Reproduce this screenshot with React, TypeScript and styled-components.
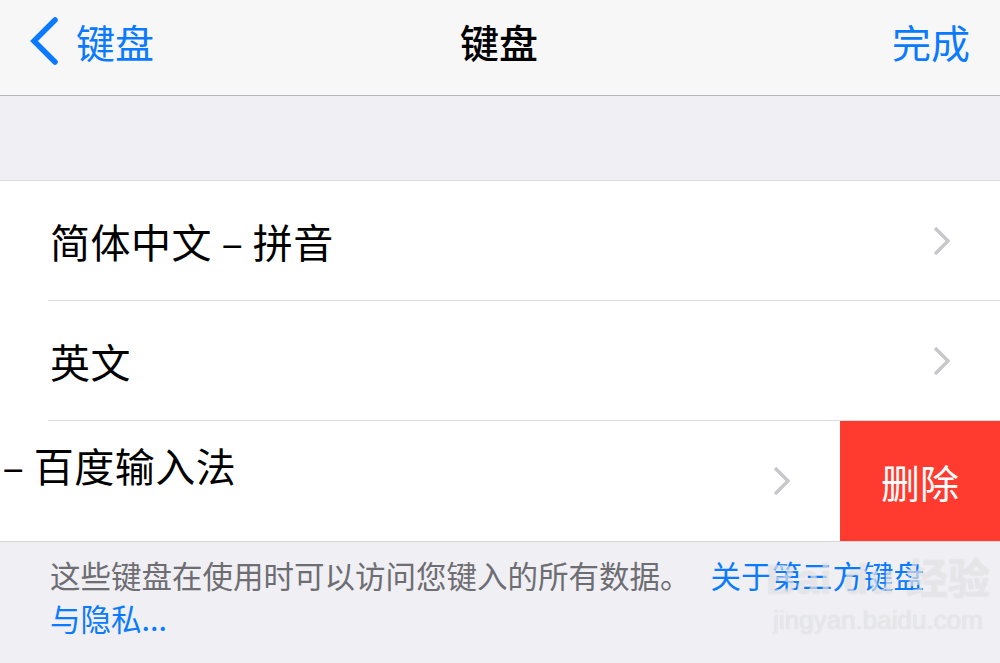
import {FC} from 'react'
import styled, {createGlobalStyle} from 'styled-components'

const FONT = `"Noto Sans CJK SC", "Noto Sans", sans-serif`
const BLUE = '#0a7aff'

const GlobalStyle = createGlobalStyle`
  html, body {
    margin: 0;
    padding: 0;
    background: #efeff4;
  }
  * {
    box-sizing: border-box;
  }
`

interface Item {
  label: string
  swiped?: boolean
}

const ITEMS: Item[] = [
  {label: '简体中文 – 拼音'},
  {label: '英文'},
  {label: '百度 – 百度输入法', swiped: true},
]

const BackChevron = () => (
  <svg width="32" height="48" viewBox="0 0 32 48">
    <path d="M27 3 L6 24 L27 45" fill="none" stroke={BLUE} strokeWidth="5.5" strokeLinecap="round" />
  </svg>
)

const RowChevron = () => (
  <svg width="20" height="32" viewBox="0 0 20 32">
    <path d="M3 3 L16 16 L3 29" fill="none" stroke="#c7c7cc" strokeWidth="3.4" />
  </svg>
)

const App: FC = () => (
  <Page>
    <GlobalStyle />
    <NavBar>
      <BackButton>
        <BackChevron />
        <span>键盘</span>
      </BackButton>
      <NavTitle>键盘</NavTitle>
      <DoneButton>完成</DoneButton>
    </NavBar>

    <Group>
      {ITEMS.map((item, i) =>
        item.swiped ? (
          <SwipeRow key={item.label}>
            <SwipeContent>
              <Label $raised>{item.label}</Label>
              <RowChevron />
            </SwipeContent>
            <DeleteButton>删除</DeleteButton>
          </SwipeRow>
        ) : (
          <Row key={item.label} $last={i === ITEMS.length - 1}>
            <Label>{item.label}</Label>
            <RowChevron />
          </Row>
        ),
      )}
    </Group>

    <Footer>
      这些键盘在使用时可以访问您键入的所有数据。<Link>关于第三方键盘与隐私...</Link>
    </Footer>

    <Watermark>
      <WatermarkLogo>Bai du 经验</WatermarkLogo>
      <WatermarkUrl>jingyan.baidu.com</WatermarkUrl>
    </Watermark>
  </Page>
)

const Page = styled.div`
  position: relative;
  width: 1000px;
  height: 663px;
  overflow: hidden;
  background: #efeff4;
  font-family: ${FONT};
  display: flex;
  flex-direction: column;
`
const NavBar = styled.header`
  height: 96px;
  flex: 0 0 96px;
  background: #f7f7f7;
  border-bottom: 1px solid #b4b4b8;
  display: grid;
  grid-template-columns: 1fr auto 1fr;
  align-items: center;
  padding: 0 30px 14px 28px;
  font-size: 39px;
`
const BackButton = styled.div`
  display: flex;
  align-items: center;
  gap: 16px;
  color: ${BLUE};
  justify-self: start;
`
const NavTitle = styled.div`
  color: #000;
  font-size: 39px;
  font-weight: 500;
`
const DoneButton = styled.div`
  color: ${BLUE};
  justify-self: end;
`
const Group = styled.section`
  margin-top: 84px;
  background: #fff;
  border-top: 1px solid #dcdce0;
  border-bottom: 1px solid #d8d8dc;
`
const Row = styled.div<{$last?: boolean}>`
  height: 120px;
  margin-left: 48px;
  padding-right: 48px;
  display: flex;
  align-items: center;
  justify-content: space-between;
  border-bottom: ${p => (p.$last ? 'none' : '1px solid #dcdce0')};
`
const Label = styled.span<{$raised?: boolean}>`
  font-size: 40px;
  letter-spacing: 0.5px;
  color: #000;
  padding-left: 2px;
  white-space: nowrap;
  margin-bottom: ${p => (p.$raised ? '32px' : '0')};
`
const SwipeRow = styled.div`
  height: 120px;
  display: flex;
  overflow: hidden;
`
const SwipeContent = styled.div`
  flex: 0 0 1000px;
  margin-left: -160px;
  padding: 0 48px 0 70px;
  display: flex;
  align-items: center;
  justify-content: space-between;
  background: #fff;
`
const DeleteButton = styled.div`
  flex: 0 0 160px;
  background: #ff3b30;
  color: #fff;
  font-size: 39px;
  display: flex;
  align-items: center;
  justify-content: center;
`
const Footer = styled.p`
  margin: 0;
  padding: 12px 56px 0 50px;
  font-size: 30.5px;
  line-height: 43px;
  color: #6d6d72;
`
const Link = styled.span`
  color: ${BLUE};
  margin-left: 20px;
`
const Watermark = styled.div`
  position: absolute;
  left: 766px;
  top: 556px;
  display: flex;
  flex-direction: column;
  align-items: center;
  font-family: "Liberation Sans", "Noto Sans CJK SC", sans-serif;
  color: rgba(255, 255, 255, 0.5);
  text-shadow: 0 0 1px rgba(150, 150, 155, 0.4);
  pointer-events: none;
`
const WatermarkLogo = styled.div`
  font-size: 42px;
  font-weight: 700;
  line-height: 48px;
`
const WatermarkUrl = styled.div`
  font-size: 26px;
  line-height: 32px;
`

export default App
